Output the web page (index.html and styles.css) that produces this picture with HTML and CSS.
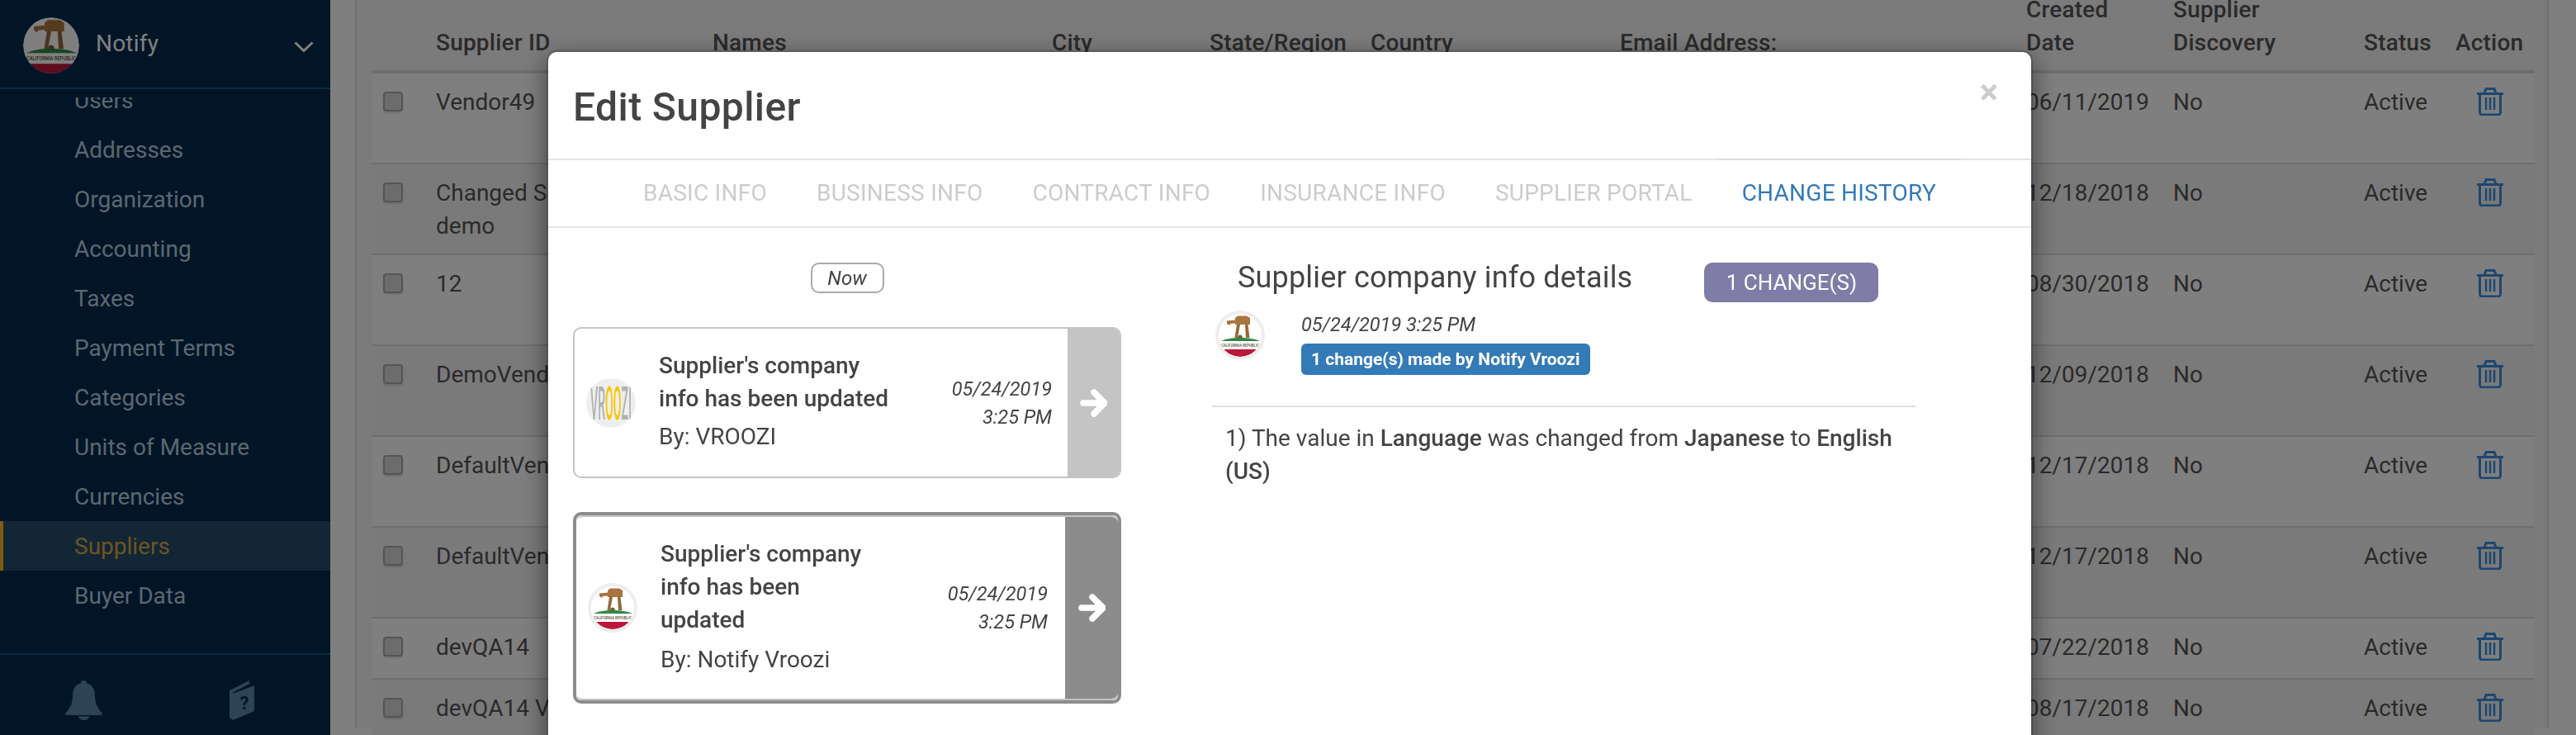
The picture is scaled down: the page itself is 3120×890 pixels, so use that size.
FILE: index.html
```html
<!DOCTYPE html>
<html>
<head>
    <meta charset="utf-8">
    <title>Edit Supplier</title>
    <link rel="stylesheet" href="styles.css">
</head>
<body>
<svg class="defs" width="0" height="0">
    <defs>
        <clipPath id="flagclip"><circle cx="30" cy="30" r="26"></circle></clipPath>
        <symbol id="flag" viewBox="4 4 52 52">
            <g clip-path="url(#flagclip)">
                <rect x="4" y="4" width="52" height="52" fill="#fff"></rect>
                <path d="M24 9l3-2.500h11l4 2.500v8h-18z" fill="#a9743f"></path>
                <path d="M14 12.500l10-1v4l-6 .5-1 2-3-2z" fill="#a9743f"></path>
                <path d="M26 17l-2.500 16h3.500l3-16zM36 17l1 16h4.500l-2-16z" fill="#96683a"></path>
                <path d="M27 33c0-4 5-5 6 0z" fill="#7d5a32"></path>
                <path d="M7 37c7-3 13-4 23-4s17 1 24 4z" fill="#2f8a45"></path>
                <text x="30" y="44" class="flag-text" textLength="46" lengthAdjust="spacingAndGlyphs">CALIFORNIA REPUBLIC</text>
                <rect x="4" y="47" width="52" height="10" fill="#b9183a"></rect>
            </g>
        </symbol>
        <symbol id="trash" viewBox="0 0 32 34">
            <g fill="none" stroke="currentColor" stroke-width="3">
                <path d="M0 7.500h32M9 7l2-5.500h10l2 5.500"></path>
                <path d="M3.500 8v22a3 3 0 0 0 3 3h19a3 3 0 0 0 3-3V8"></path>
                <path d="M11 12v15M16 12v15M21 12v15" stroke-width="2.500"></path>
            </g>
        </symbol>
        <symbol id="arrow" viewBox="0 0 33 34">
            <path d="M4 17h23M17 4l13 13-13 13" fill="none" stroke="#fff" stroke-width="7.500" stroke-linecap="round" stroke-linejoin="round"></path>
        </symbol>
    </defs>
</svg>

<div class="page">
    <aside class="sidebar">
        <div class="side-head">
            <svg class="side-logo"><use href="#flag"></use></svg>
            <span class="side-name">Notify</span>
            <svg class="side-chevron" viewBox="0 0 24 13"><path d="M1.500 1.500L12 11.500 22.500 1.500" fill="none" stroke="currentColor" stroke-width="3"></path></svg>
        </div>
        <div class="side-scroll">
            <ul class="side-menu">
                <li>Users</li>
                <li>Addresses</li>
                <li>Organization</li>
                <li>Accounting</li>
                <li>Taxes</li>
                <li>Payment Terms</li>
                <li>Categories</li>
                <li>Units of Measure</li>
                <li>Currencies</li>
                <li class="active">Suppliers</li>
                <li>Buyer Data</li>
            </ul>
        </div>
        <div class="side-foot">
            <svg class="bell" viewBox="0 0 45 48"><path d="M22.500 0c-2 0-3.500 1.500-3.500 3.300C12 5 9 11 9 18c0 10-3 15-9 22 0 1 1 2 2 2h41c1 0 2-1 2-2-6-7-9-12-9-22 0-7-3-13-10-14.700C26 1.500 24.500 0 22.500 0z"></path><path d="M16 43.500a6.500 4.500 0 0 0 13 0z"></path></svg>
            <svg class="book" viewBox="0 0 30 48"><path d="M0 12L24 0v4L4 14.500V16L30 6v31L4.300 48 0 45z"></path><text x="18" y="35" class="book-mark">?</text></svg>
        </div>
    </aside>

    <main class="content">
        <div class="panel">
            <table class="grid">
                <colgroup>
                    <col class="c-check"><col class="c-id"><col class="c-names"><col class="c-city"><col class="c-state"><col class="c-country"><col class="c-email"><col class="c-date"><col class="c-disc"><col class="c-status"><col class="c-action">
                </colgroup>
                <thead>
                    <tr><th></th><th>Supplier ID</th><th>Names</th><th>City</th><th>State/Region</th><th>Country</th><th>Email Address:</th><th class="wrap">Created Date</th><th>Supplier Discovery</th><th>Status</th><th>Action</th></tr>
                </thead>
                <tbody>
                    <tr><td><span class="check"></span></td><td>Vendor49</td><td></td><td></td><td></td><td></td><td></td><td>06/11/2019</td><td>No</td><td>Active</td><td><svg class="trash"><use href="#trash"></use></svg></td></tr>
                    <tr><td><span class="check"></span></td><td>Changed Supplier Name demo</td><td></td><td></td><td></td><td></td><td></td><td>12/18/2018</td><td>No</td><td>Active</td><td><svg class="trash"><use href="#trash"></use></svg></td></tr>
                    <tr><td><span class="check"></span></td><td>12</td><td></td><td></td><td></td><td></td><td></td><td>08/30/2018</td><td>No</td><td>Active</td><td><svg class="trash"><use href="#trash"></use></svg></td></tr>
                    <tr><td><span class="check"></span></td><td>DemoVendor</td><td></td><td></td><td></td><td></td><td></td><td>12/09/2018</td><td>No</td><td>Active</td><td><svg class="trash"><use href="#trash"></use></svg></td></tr>
                    <tr><td><span class="check"></span></td><td>DefaultVendor</td><td></td><td></td><td></td><td></td><td></td><td>12/17/2018</td><td>No</td><td>Active</td><td><svg class="trash"><use href="#trash"></use></svg></td></tr>
                    <tr><td><span class="check"></span></td><td>DefaultVendor</td><td></td><td></td><td></td><td></td><td></td><td>12/17/2018</td><td>No</td><td>Active</td><td><svg class="trash"><use href="#trash"></use></svg></td></tr>
                    <tr class="short"><td><span class="check"></span></td><td>devQA14</td><td></td><td></td><td></td><td></td><td></td><td>07/22/2018</td><td>No</td><td>Active</td><td><svg class="trash"><use href="#trash"></use></svg></td></tr>
                    <tr class="short"><td><span class="check"></span></td><td>devQA14 Vendor</td><td></td><td></td><td></td><td></td><td></td><td>08/17/2018</td><td>No</td><td>Active</td><td><svg class="trash"><use href="#trash"></use></svg></td></tr>
                </tbody>
            </table>
        </div>
    </main>
</div>

<div class="backdrop"></div>

<div class="modal">
    <div class="modal-head">
        <h1 class="modal-title">Edit Supplier</h1>
        <span class="close">&times;</span>
    </div>
    <div class="tabs">
        <a>BASIC INFO</a>
        <a>BUSINESS INFO</a>
        <a>CONTRACT INFO</a>
        <a>INSURANCE INFO</a>
        <a>SUPPLIER PORTAL</a>
        <a class="active">CHANGE HISTORY</a>
    </div>
    <div class="modal-body">
        <div class="timeline">
            <div class="now"><span>Now</span></div>
            <div class="card">
                <svg class="avatar" viewBox="0 0 60 60">
                    <circle cx="30" cy="30" r="30" fill="#eee"></circle>
                    <text x="30" y="50" class="vroozi-text" textLength="50" lengthAdjust="spacingAndGlyphs">VR<tspan class="vroozi-o">OO</tspan>ZI</text>
                </svg>
                <div class="card-text">
                    <div class="card-title">Supplier's company info has been updated</div>
                    <div class="card-by">By: VROOZI</div>
                </div>
                <div class="card-date">05/24/2019<br>3:25 PM</div>
                <div class="card-go"><svg class="go-arrow"><use href="#arrow"></use></svg></div>
            </div>
            <div class="card selected">
                <div class="card-inner">
                    <span class="avatar ring"><svg><use href="#flag"></use></svg></span>
                    <div class="card-text">
                        <div class="card-title">Supplier's company info has been updated</div>
                        <div class="card-by">By: Notify Vroozi</div>
                    </div>
                    <div class="card-date">05/24/2019<br>3:25 PM</div>
                    <div class="card-go"><svg class="go-arrow"><use href="#arrow"></use></svg></div>
                </div>
            </div>
        </div>
        <div class="details">
            <div class="details-head">
                <h2>Supplier company info details</h2>
                <span class="count">1 CHANGE(S)</span>
            </div>
            <div class="meta">
                <span class="avatar ring"><svg><use href="#flag"></use></svg></span>
                <div>
                    <div class="meta-date">05/24/2019 3:25 PM</div>
                    <span class="label">1 change(s) made by Notify Vroozi</span>
                </div>
            </div>
            <hr class="rule">
            <p class="change">1) The value in <b>Language</b> was changed from <b>Japanese</b> to <b>English (US)</b></p>
        </div>
    </div>
</div>
</body>
</html>
```
FILE: styles.css
```css
html, body {
    margin: 0;
    height: 100%;
    overflow: hidden;
}
body {
    font-family: Roboto, "Liberation Sans", sans-serif;
    font-size: 28px;
    line-height: 40px;
    color: #555;
    background: #fff;
}
.defs {
    position: absolute;
}
.flag-text {
    font-family: Roboto, sans-serif;
    font-size: 5px;
    font-weight: 500;
    text-anchor: middle;
    fill: #5c4a30;
}
.vroozi-text {
    font-family: Roboto, sans-serif;
    font-size: 56px;
    font-weight: 500;
    text-anchor: middle;
    fill: #b2b2b2;
}
.vroozi-o {
    fill: #f8c800;
}

/* page under the dialog */
.page {
    display: flex;
    height: 890px;
}
.sidebar {
    width: 400px;
    flex: none;
    display: flex;
    flex-direction: column;
    background: #042a4c;
    color: #b8cfe2;
}
.side-head {
    height: 106px;
    flex: none;
    display: flex;
    align-items: center;
    padding: 0 20px 0 28px;
    border-bottom: 2px solid #145488;
    box-sizing: content-box;
}
.side-logo {
    width: 68px;
    height: 68px;
    flex: none;
    margin-top: 4px;
    border-radius: 50%;
}
.side-name {
    margin-left: 20px;
    flex: 1;
    color: #fff;
    letter-spacing: .2px;
}
.side-chevron {
    width: 24px;
    height: 13px;
    color: #fff;
    margin-top: 6px;
}
.side-scroll {
    flex: 1;
    overflow: hidden;
    margin-top: 10px;
}
.side-menu {
    list-style: none;
    margin: -27px 0 0;
    padding: 0;
}
.side-menu li {
    height: 60px;
    line-height: 61px;
    padding-left: 90px;
}
.side-menu li.active {
    padding-left: 86px;
    border-left: 4px solid #ffb928;
    background: #264c6a;
    color: #dcaa44;
}
.side-foot {
    height: 66px;
    flex: none;
    display: flex;
    gap: 154px;
    padding: 31px 0 0 79px;
    border-top: 2px solid #145488;
}
.bell {
    width: 45px;
    height: 48px;
    fill: #5c86aa;
}
.book {
    width: 30px;
    height: 48px;
    fill: #5c86aa;
}
.book-mark {
    font-family: Roboto, sans-serif;
    font-size: 22px;
    font-weight: 700;
    text-anchor: middle;
    fill: #042a4c;
}

.content {
    flex: 1;
    padding: 0 30px;
    overflow: hidden;
}
.panel {
    height: 890px;
    padding: 0 18px;
    border-left: 2px solid #ddd;
    border-right: 2px solid #ddd;
    background: #f7f7f7;
    width: 2657px;
    box-sizing: border-box;
}
.grid {
    width: 2620px;
    margin-top: -8px;
    table-layout: fixed;
    border-collapse: separate;
    border-spacing: 0;
}
.c-check { width: 64px; }
.c-id { width: 335px; }
.c-names { width: 411px; }
.c-city { width: 191px; }
.c-state { width: 195px; }
.c-country { width: 302px; }
.c-email { width: 492px; }
.c-date { width: 178px; }
.c-disc { width: 231px; }
.c-status { width: 111px; }
.c-action { width: 110px; }
.grid th {
    height: 97px;
    box-sizing: border-box;
    padding: 0 0 13px 14px;
    text-align: left;
    vertical-align: bottom;
    font-weight: 500;
    letter-spacing: .2px;
    border-bottom: 4px solid #ddd;
}
.grid th.wrap {
    padding-right: 40px;
}
.grid td {
    height: 110px;
    box-sizing: border-box;
    padding: 15px 0 0 14px;
    vertical-align: top;
    border-bottom: 2px solid #ddd;
}
.grid tr.short td {
    height: 74px;
}
.grid tbody tr:nth-child(odd) td {
    background: #fff;
}
.grid tbody tr:nth-child(even) td {
    background: #f5f5f5;
}
.check {
    display: block;
    width: 24px;
    height: 24px;
    margin-top: 7px;
    box-sizing: border-box;
    border: 2px solid #aaa;
    border-radius: 4px;
    background: #d8d8d8;
    box-shadow: 0 2px 2px rgba(0,0,0,.12);
}
.trash {
    display: block;
    width: 32px;
    height: 34px;
    margin: 2px 0 0 26px;
    color: #3a8fe0;
}

/* dialog */
.backdrop {
    position: fixed;
    inset: 0;
    background: rgba(0,0,0,.5);
}
.modal {
    position: fixed;
    left: 662px;
    top: 61px;
    width: 1800px;
    height: 1000px;
    box-sizing: border-box;
    border: 2px solid rgba(0,0,0,.2);
    border-radius: 12px;
    background: #fff;
    background-clip: padding-box;
    box-shadow: 0 10px 30px rgba(0,0,0,.5);
    color: #444;
}
.modal-head {
    height: 129px;
    display: flex;
    justify-content: space-between;
    padding: 0 40px 0 30px;
    box-sizing: border-box;
}
.modal-title {
    margin: 0;
    padding-top: 39px;
    font-size: 48px;
    line-height: 56px;
    font-weight: 500;
    letter-spacing: .4px;
}
.close {
    margin-top: 28px;
    font-size: 42px;
    line-height: 42px;
    font-weight: 700;
    color: #ccc;
}
.tabs {
    display: flex;
    justify-content: center;
    height: 80px;
    border-top: 2px solid #e5e5e5;
    border-bottom: 2px solid #e5e5e5;
}
.tabs a {
    padding: 0 30px;
    line-height: 80px;
    letter-spacing: .25px;
    color: #ccc;
}
.tabs a.active {
    color: #337ab7;
    margin-top: -2px;
    border-top: 2px solid #ddd;
}
.modal-body {
    display: flex;
    gap: 110px;
    padding: 42px 0 0 30px;
}
.timeline {
    width: 664px;
    flex: none;
}
.now {
    display: flex;
    justify-content: center;
    margin-bottom: 41px;
}
.now span {
    width: 89px;
    height: 37px;
    box-sizing: border-box;
    border: 2px solid #aaa;
    border-radius: 10px;
    text-align: center;
    font-size: 24px;
    line-height: 35px;
    font-style: italic;
}
.card {
    display: flex;
    align-items: center;
    height: 183px;
    box-sizing: border-box;
    margin-bottom: 41px;
    border: 2px solid #c4c4c4;
    border-radius: 10px;
    overflow: hidden;
}
.avatar {
    display: block;
    width: 60px;
    height: 60px;
    flex: none;
    margin-left: 14px;
    border-radius: 50%;
}
.avatar.ring {
    box-sizing: border-box;
    border: 4px solid #eee;
    background: #fff;
    overflow: hidden;
}
.avatar.ring svg {
    display: block;
    width: 52px;
    height: 52px;
}
.card-text {
    width: 285px;
    flex: none;
    margin: 0 0 4px 28px;
}
.card-title {
    font-weight: 500;
}
.card-by {
    margin-top: 6px;
}
.card-date {
    flex: 1;
    padding-right: 19px;
    text-align: right;
    font-size: 23.500px;
    line-height: 34px;
    font-style: italic;
}
.card-go {
    width: 63px;
    flex: none;
    align-self: stretch;
    display: flex;
    align-items: center;
    justify-content: center;
    background: #c4c4c4;
}
.go-arrow {
    width: 33px;
    height: 34px;
}
.card.selected {
    height: 232px;
    border: 4px solid #8c8c8c;
    background: #fff;
}
.card-inner {
    display: flex;
    align-items: center;
    flex: 1;
    height: 100%;
    box-sizing: border-box;
    border-top: 2px solid #c4c4c4;
    border-bottom: 2px solid #c4c4c4;
    border-radius: 8px;
    overflow: hidden;
}
.card-inner .avatar {
    margin-left: 14px;
}
.card-inner .card-text {
    margin: 0 0 2px 28px;
    width: 270px;
}
.card-inner .card-by {
    margin-top: 8px;
}
.card-inner .card-date {
    padding-right: 21px;
}
.card-inner .card-go {
    background: #8c8c8c;
    margin: -2px 0;
    width: 64px;
}
.details {
    width: 852px;
    flex: none;
}
.details-head {
    display: flex;
    align-items: flex-start;
    gap: 87px;
    padding-left: 31px;
}
.details-head h2 {
    margin: 0;
    font-size: 36px;
    line-height: 36px;
    font-weight: 400;
    letter-spacing: .17px;
}
.count {
    width: 211px;
    height: 48px;
    line-height: 48px;
    border-radius: 10px;
    text-align: center;
    background: #7f7ca8;
    color: #fff;
    font-size: 26px;
}
.meta {
    display: flex;
    gap: 44px;
    margin-top: 10px;
    padding-left: 4px;
}
.meta .avatar {
    margin-left: 0;
}
.meta-date {
    height: 40px;
    font-size: 23.500px;
    line-height: 34px;
    font-style: italic;
}
.label {
    display: block;
    width: max-content;
    height: 38px;
    padding: 0 12px;
    border-radius: 6px;
    background: #337ab7;
    color: #fff;
    font-size: 21px;
    line-height: 38px;
    font-weight: 700;
}
.rule {
    height: 2px;
    margin: 37px 0 18px;
    border: 0;
    background: #e0e0e0;
}
.change {
    margin: 0;
    padding-left: 16px;
}
.change b {
    font-weight: 500;
}
```
